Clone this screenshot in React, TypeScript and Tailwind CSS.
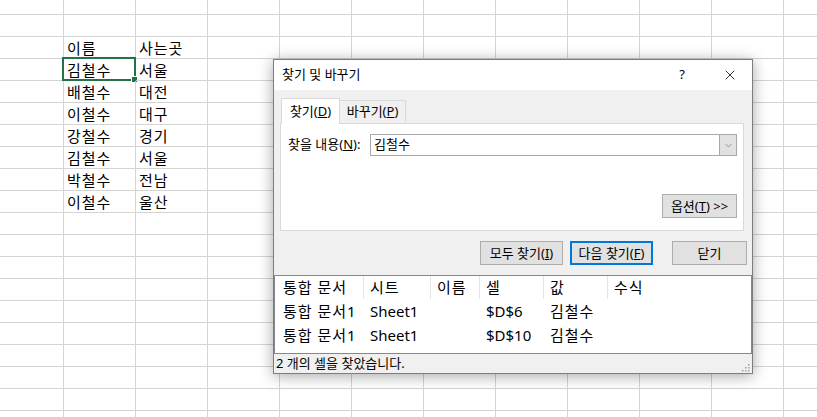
import { X, ChevronDown } from "lucide-react";

const COLS = 12;
const ROWS = 20;

const sheetData: Record<string, string> = {
    "2-1": "이름",
    "2-2": "사는곳",
    "3-1": "김철수",
    "3-2": "서울",
    "4-1": "배철수",
    "4-2": "대전",
    "5-1": "이철수",
    "5-2": "대구",
    "6-1": "강철수",
    "6-2": "경기",
    "7-1": "김철수",
    "7-2": "서울",
    "8-1": "박철수",
    "8-2": "전남",
    "9-1": "이철수",
    "9-2": "울산",
};

const results = [
    { book: "통합 문서1", sheet: "Sheet1", name: "", cell: "$D$6", value: "김철수", formula: "" },
    { book: "통합 문서1", sheet: "Sheet1", name: "", cell: "$D$10", value: "김철수", formula: "" },
];

function Sheet() {
    const cells = [];
    for (let r = 0; r < ROWS; r++) {
        for (let c = 0; c < COLS; c++) {
            const key = `${r}-${c}`;
            const selected = r === 3 && c === 1;
            cells.push(
                <div
                    key={key}
                    className="relative flex items-center pl-[3px] pt-[1px] border-r border-b border-[#d4d4d4] text-[15px] leading-none tracking-[1px] text-black whitespace-nowrap"
                >
                    {sheetData[key]}
                    {selected && (
                        <>
                            <div className="absolute -left-[2px] -top-[2px] w-[74px] h-[24px] border-2 border-[#217346] pointer-events-none" />
                            <div className="absolute -right-[3px] -bottom-[3px] w-[5px] h-[5px] bg-[#217346] border border-white box-content" />
                        </>
                    )}
                </div>
            );
        }
    }
    return (
        <div className="-ml-[8px] -mt-[7px] grid grid-cols-[repeat(12,72px)] grid-rows-[repeat(20,22px)]">
            {cells}
        </div>
    );
}

function Btn({
    children,
    className = "",
}: Readonly<{ children: React.ReactNode; className?: string }>) {
    return (
        <div
            className={`flex items-center justify-center h-[24px] bg-[#e1e1e1] text-[13px] leading-none text-black ${className}`}
        >
            {children}
        </div>
    );
}

function FindDialog() {
    return (
        <div className="absolute left-[273px] top-[59px] w-[480px] h-[315px] flex flex-col bg-[#f0f0f0] border border-[#7d7d7d] shadow-[0_2px_14px_rgba(0,0,0,0.35)] text-[13px] text-black">
            {/* title bar */}
            <div className="flex items-center h-[30px] bg-white shrink-0">
                <span className="pl-[8px] text-[13px]">찾기 및 바꾸기</span>
                <span className="ml-auto mr-[37px] text-[13px]">?</span>
                <X className="mr-[14px] w-[16px] h-[16px]" strokeWidth={1.2} />
            </div>

            {/* tabs */}
            <div className="flex items-end pl-[7px] pt-[7px] h-[33px] shrink-0">
                <div className="relative z-10 -mb-px flex items-center justify-center w-[59px] h-[26px] bg-white border border-b-0 border-[#d9d9d9]">
                    찾기(<span className="underline">D</span>)
                </div>
                <div className="flex items-center justify-center w-[66px] h-[22px] bg-[#f0f0f0] border border-l-0 border-b-0 border-[#d9d9d9] mb-px">
                    바꾸기(<span className="underline">P</span>)
                </div>
            </div>

            {/* panel */}
            <div className="ml-[6px] mr-[8px] h-[108px] bg-white border border-[#d9d9d9] pl-[7px] pr-[6px] pt-[10px] shrink-0">
                <div className="flex items-center">
                    <span className="w-[82px] whitespace-nowrap">
                        찾을 내용(<span className="underline">N</span>):
                    </span>
                    <div className="flex-1 h-[22px] flex items-center border border-[#a9a9a9] bg-white">
                        <span className="pl-[3px]">김철수</span>
                        <div className="ml-auto w-[17px] h-full bg-[#e1e1e1] border-l border-[#a9a9a9] flex items-center justify-center">
                            <ChevronDown className="w-[11px] h-[11px] text-[#606060]" strokeWidth={1.3} />
                        </div>
                    </div>
                </div>
                <div className="flex justify-end mt-[38px]">
                    <Btn className="w-[75px] border border-[#adadad]">
                        옵션(<span className="underline">T</span>) &gt;&gt;
                    </Btn>
                </div>
            </div>

            {/* buttons */}
            <div className="flex justify-end items-center mt-[10px] pr-[5px] gap-[7px] shrink-0">
                <Btn className="w-[83px] border border-[#adadad]">
                    모두 찾기(<span className="underline">I</span>)
                </Btn>
                <Btn className="w-[83px] border-2 border-[#0078d7]">
                    다음 찾기(<span className="underline">F</span>)
                </Btn>
                <Btn className="ml-[12px] w-[75px] border border-[#adadad]">닫기</Btn>
            </div>

            {/* results list */}
            <div className="mt-[10px] h-[79px] bg-white border border-[#828790] shrink-0 text-[15px] leading-none">
                <div className="grid grid-cols-[89px_67px_49px_64px_64px_1fr] h-[23px] tracking-[1px]">
                    {["통합 문서", "시트", "이름", "셀", "값", "수식"].map((h, i) => (
                        <div
                            key={h}
                            className={`flex items-center ${i === 0 ? "pl-[8px]" : "pl-[6px]"} ${i < 5 ? "border-r border-[#e5e5e5]" : ""}`}
                        >
                            {h}
                        </div>
                    ))}
                </div>
                {results.map((r) => (
                    <div
                        key={r.cell}
                        className="grid grid-cols-[89px_67px_49px_64px_64px_1fr] h-[24px]"
                    >
                        <div className="flex items-center pl-[8px] whitespace-nowrap tracking-[1px]">{r.book}</div>
                        <div className="flex items-center pl-[6px]">{r.sheet}</div>
                        <div className="flex items-center pl-[6px]">{r.name}</div>
                        <div className="flex items-center pl-[6px]">{r.cell}</div>
                        <div className="flex items-center pl-[6px] tracking-[1px]">{r.value}</div>
                        <div className="flex items-center pl-[6px]">{r.formula}</div>
                    </div>
                ))}
            </div>

            {/* status bar */}
            <div className="relative flex-1 flex items-center pl-[2px]">
                <span className="text-[13px]">2 개의 셀을 찾았습니다.</span>
                <svg className="absolute right-[2px] bottom-[2px]" width="10" height="10" viewBox="0 0 10 10">
                    {[
                        [8, 2],
                        [5, 5],
                        [8, 5],
                        [2, 8],
                        [5, 8],
                        [8, 8],
                    ].map(([x, y]) => (
                        <rect key={`${x}-${y}`} x={x} y={y} width="1.5" height="1.5" fill="#a0a0a0" />
                    ))}
                </svg>
            </div>
        </div>
    );
}

export default function App() {
    return (
        <div className="relative w-[817px] h-[417px] overflow-hidden bg-white font-['Noto_Sans','Noto_Sans_CJK_KR',sans-serif]">
            <Sheet />
            <FindDialog />
        </div>
    );
}
